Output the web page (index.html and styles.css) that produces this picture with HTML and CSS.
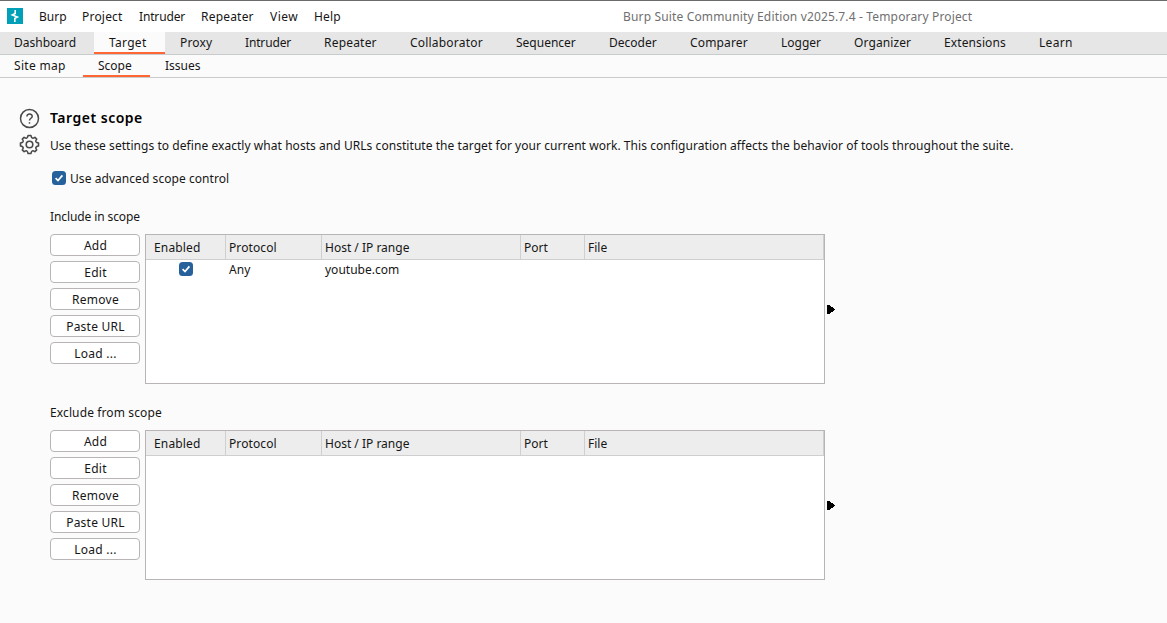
FILE: index.html
```html
<!DOCTYPE html>
<html lang="en">
<head>
<meta charset="utf-8">
<title>Burp Suite Community Edition</title>
<link rel="stylesheet" href="styles.css">
</head>
<body>
<svg class="defs" width="0" height="0">
  <symbol id="check" viewBox="0 0 14 14"><rect width="14" height="14" rx="3.5" fill="#26619c"/><path d="M3.6 7.2 6 9.5 10.4 4.4" fill="none" stroke="#fff" stroke-width="1.7"/></symbol>
  <symbol id="arrow" viewBox="0 0 8 9"><path d="M0 0H2L8 4V5L2 9H0Z" fill="#000" shape-rendering="crispEdges"/></symbol>
</svg>
<header class="menubar">
  <svg class="logo" viewBox="0 0 16 16"><rect width="16" height="16" fill="#00a0b8"/><path d="M8.2 2V5.6L5.4 6.9 10.4 9 7.8 10.4V14" fill="none" stroke="#fff" stroke-width="1.6"/></svg>
  <nav class="menus">
    <span class="m-burp">Burp</span><span class="m-project">Project</span><span class="m-intruder">Intruder</span><span class="m-repeater">Repeater</span><span class="m-view">View</span><span class="m-help">Help</span>
  </nav>
  <div class="title">Burp Suite Community Edition v2025.7.4 - Temporary Project</div>
</header>
<nav class="tabs">
  <span class="dashboard">Dashboard</span><span class="target active">Target</span><span class="proxy">Proxy</span><span class="intruder">Intruder</span><span class="repeater">Repeater</span><span class="collaborator">Collaborator</span><span class="sequencer">Sequencer</span><span class="decoder">Decoder</span><span class="comparer">Comparer</span><span class="logger">Logger</span><span class="organizer">Organizer</span><span class="extensions">Extensions</span><span class="learn">Learn</span>
</nav>
<nav class="tabs subtabs">
  <span class="sitemap">Site map</span><span class="scope active">Scope</span><span class="issues">Issues</span>
</nav>
<main class="page">
  <aside class="icons">
    <svg viewBox="-0.5 -0.5 20 20" fill="none" stroke="#4a4a4a" stroke-width="1.5"><circle cx="10" cy="10" r="9"/><path d="M7.4 8.1C7.4 4.6 12.8 4.8 12.7 8 12.6 9.9 10 9.7 10 12.1" stroke-width="1.5"/><path d="M10 13.7V15.2" stroke-width="1.5"/></svg>
    <svg viewBox="-0.5 -0.5 20 20" fill="none" stroke="#4a4a4a" stroke-width="1.6" stroke-linejoin="round"><path d="M8.6 1H11.4Q12 3.6 13.1 3.7 14 3.8 15.4 2.8L17.2 4.6Q16.2 6.1 16.3 6.9 16.5 8 19 8.6V11.4Q16.5 12 16.3 13.1 16.2 13.9 17.2 15.4L15.4 17.2Q14 16.2 13.1 16.3 12 16.5 11.4 19H8.6Q8 16.5 6.9 16.3 6 16.2 4.6 17.2L2.8 15.4Q3.8 13.9 3.7 13.1 3.5 12 1 11.4V8.6Q3.5 8 3.7 6.9 3.8 6.1 2.8 4.6L4.6 2.8Q6 3.8 6.9 3.7 8 3.6 8.6 1Z"/><circle cx="10" cy="10" r="3.3"/></svg>
  </aside>
  <div class="content">
    <h1>Target scope</h1>
    <p class="description">Use these settings to define exactly what hosts and URLs constitute the target for your current work. This configuration affects the behavior of tools throughout the suite.</p>
    <div class="option"><svg class="check"><use href="#check"/></svg><span>Use advanced scope control</span></div>
    <section class="rules include">
      <h2>Include in scope</h2>
      <div class="panel">
        <div class="buttons"><button>Add</button><button>Edit</button><button>Remove</button><button>Paste URL</button><button>Load ...</button></div>
        <div class="table">
          <div class="row head"><span>Enabled</span><span>Protocol</span><span>Host / IP range</span><span>Port</span><span>File</span></div>
          <div class="row"><span><svg class="check"><use href="#check"/></svg></span><span>Any</span><span>youtube.com</span><span></span><span></span></div>
        </div>
        <svg class="arrow"><use href="#arrow"/></svg>
      </div>
    </section>
    <section class="rules exclude">
      <h2>Exclude from scope</h2>
      <div class="panel">
        <div class="buttons"><button>Add</button><button>Edit</button><button>Remove</button><button>Paste URL</button><button>Load ...</button></div>
        <div class="table">
          <div class="row head"><span>Enabled</span><span>Protocol</span><span>Host / IP range</span><span>Port</span><span>File</span></div>
        </div>
        <svg class="arrow"><use href="#arrow"/></svg>
      </div>
    </section>
  </div>
</main>
</body>
</html>
```

FILE: styles.css
```css
* { box-sizing: border-box; }
body { margin: 0; height: 623px; overflow: hidden; background: #fbfbfb; color: #161616; font: 12px/18px "Noto Sans", sans-serif; white-space: nowrap; }
.defs { display: block; position: absolute; }
.menubar { display: flex; height: 32px; background: #fff; border-top: 1px solid #6b6969; }
.logo { width: 16px; height: 16px; margin: 7px 16px 0 7px; }
.menus { display: flex; width: 584px; padding-top: 7px; }
.m-burp { width: 43px; }
.m-project { width: 57px; letter-spacing: 0.2px; }
.m-intruder { width: 62px; letter-spacing: -0.15px; }
.m-repeater { width: 69px; letter-spacing: 0.2px; }
.m-view { width: 44px; letter-spacing: 0.5px; }
.m-help { letter-spacing: 0.2px; }
.title { padding-top: 7px; color: #6f6f6f; letter-spacing: 0.155px; }
.tabs { display: flex; height: 23px; background: #e6e6e6; border-bottom: 1px solid #c8cccc; }
.tabs span { height: 22px; padding: 2px 0 0 15px; }
.tabs .active { background: #fbfbfb; border-bottom: 2px solid #ff6633; }
.subtabs { background: #fbfbfb; }
.tabs .dashboard { width: 94px; padding-left: 14px; }
.target { width: 71px; letter-spacing: 0.3px; }
.proxy { width: 65px; letter-spacing: 0.15px; }
.intruder { width: 79px; letter-spacing: -0.15px; }
.repeater { width: 86px; letter-spacing: 0.2px; }
.collaborator { width: 106px; letter-spacing: 0.2px; }
.sequencer { width: 93px; }
.decoder { width: 81px; }
.comparer { width: 91px; letter-spacing: 0.15px; }
.logger { width: 73px; }
.organizer { width: 90px; letter-spacing: 0.1px; }
.extensions { width: 95px; letter-spacing: 0.1px; }
.learn { width: 63px; letter-spacing: 0.3px; }
.tabs .sitemap { width: 83px; padding-left: 14px; letter-spacing: 0.3px; }
.scope { width: 67px; }
.page { display: flex; padding: 30px 0 0 19px; }
.icons { display: flex; flex-direction: column; gap: 6px; width: 31px; }
.icons svg { width: 20px; height: 20px; overflow: visible; }
h1 { margin: 0; font-size: 14px; line-height: 20px; font-weight: 600; letter-spacing: 0.5px; color: #000; }
.description { margin: 9px 0 0; letter-spacing: 0.052px; }
.option { display: flex; gap: 4px; margin: 15px 0 0 2px; letter-spacing: 0.06px; }
.option .check { margin-top: 1px; }
.check { display: block; width: 14px; height: 14px; }
.rules { margin-top: 20px; }
h2 { margin: 0; font-size: 12px; line-height: 18px; font-weight: 400; }
.include h2 { letter-spacing: -0.1px; }
.exclude h2 { letter-spacing: 0.12px; }
.panel { display: flex; margin-top: 8px; }
.buttons { display: flex; flex-direction: column; gap: 5px; width: 90px; margin-right: 5px; }
button { height: 22px; padding: 2px 0 0 1px; border: 1px solid #b9b5b7; border-radius: 4px; background: #fff; color: #161616; font: inherit; letter-spacing: 0.25px; }
.table { width: 680px; height: 150px; border: 1px solid #b9b5b7; background: #fff; }
.row { display: grid; grid-template-columns: 80px 96px 199px 64px 1fr; height: 19px; }
.row span { padding: 1px 0 0 3px; }
.row span:first-child { padding-left: 8px; letter-spacing: 0.15px; }
.row span:nth-child(2) { letter-spacing: 0.1px; }
.row .check { margin: 1px 0 0 25px; }
.head { height: 25px; background: #ededed; border-bottom: 1px solid #cfcfcf; }
.head span { padding-top: 4px; border-right: 1px solid #cfcfcf; }
.arrow { width: 8px; height: 9px; margin: 71px 0 0 2px; }
```
